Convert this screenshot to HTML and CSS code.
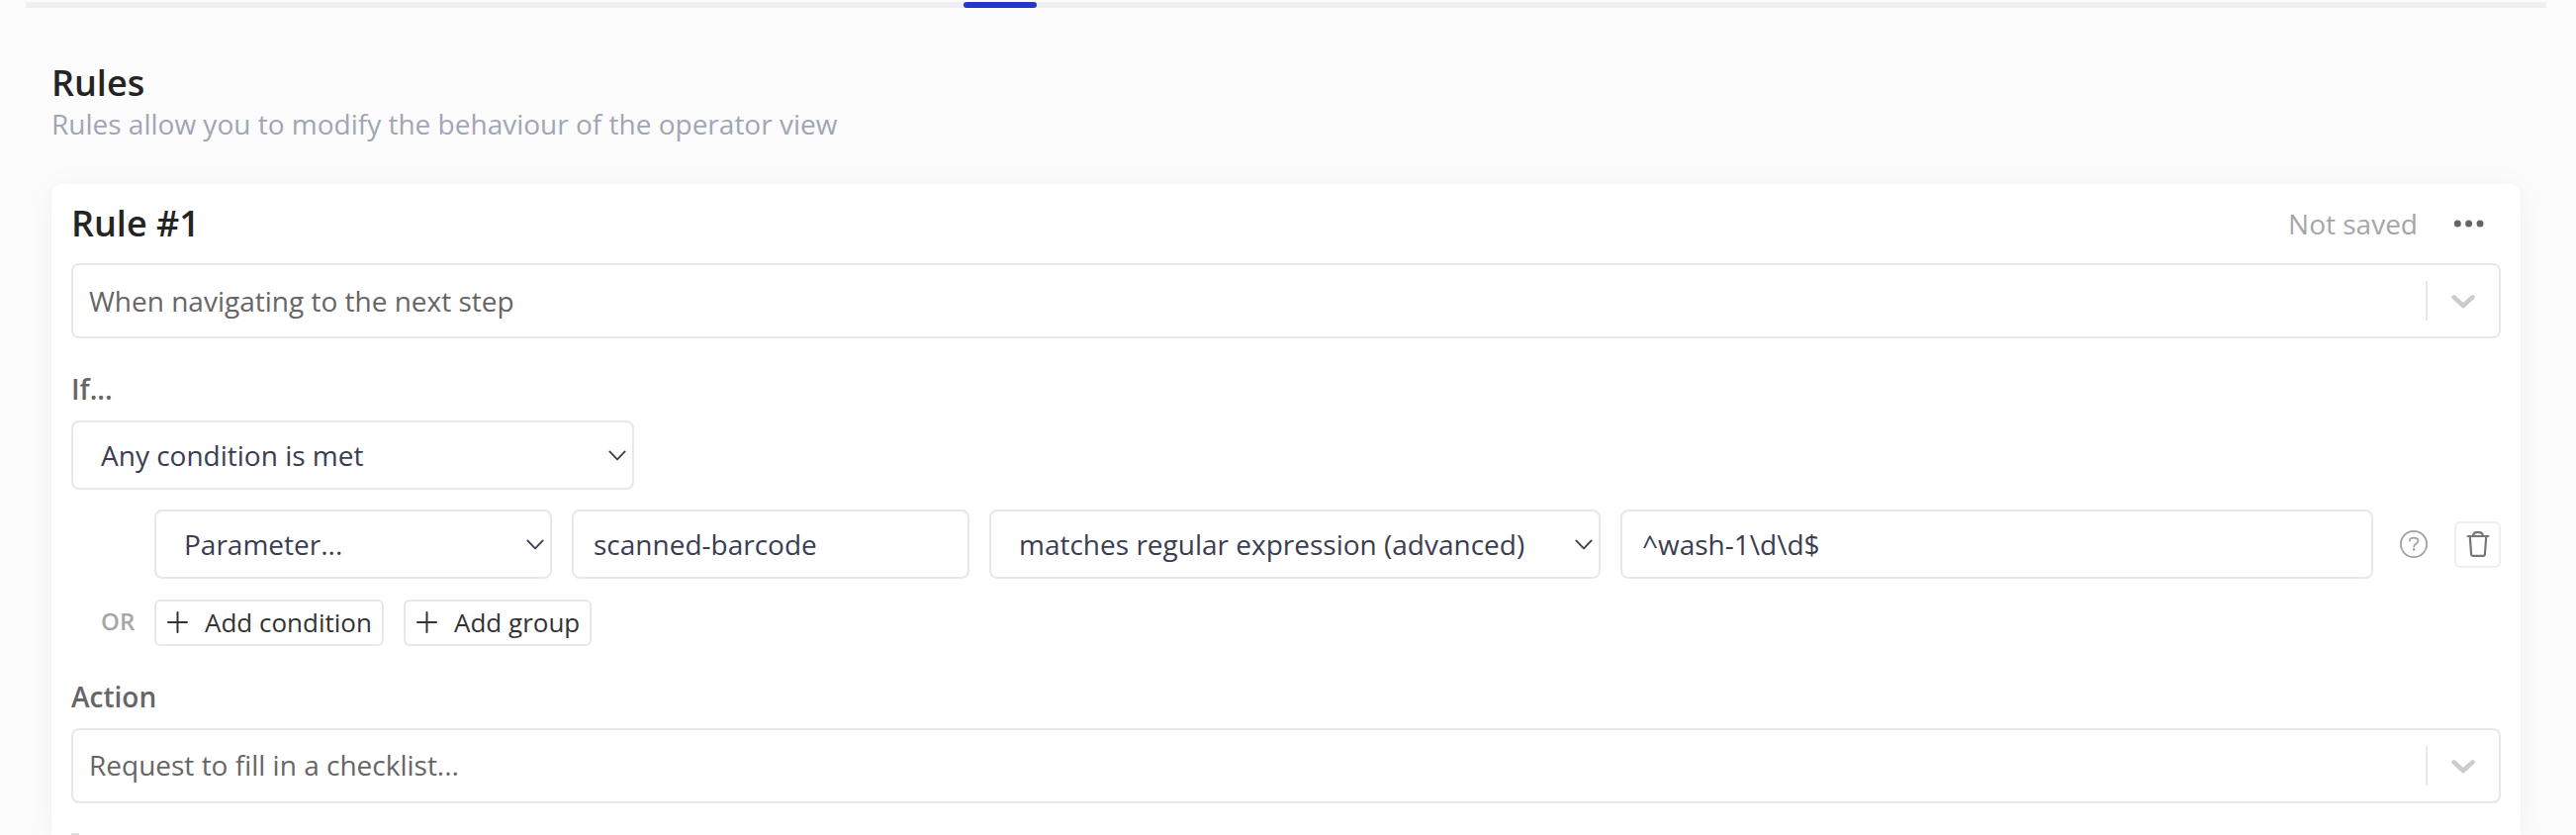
FILE: index.html
```html
<!DOCTYPE html>
<html lang="en">
<head>
<meta charset="utf-8">
<title>Rules</title>
<link rel="stylesheet" href="styles.css">
</head>
<body>
<div class="tab-track"><div class="tab-active"></div></div>
<main class="page">
  <header class="page-header">
    <h1 class="title">Rules</h1>
    <p class="subtitle">Rules allow you to modify the behaviour of the operator view</p>
  </header>
  <section class="card">
    <div class="card-header">
      <h2 class="title card-title">Rule #1</h2>
      <span class="status">Not saved</span>
      <svg class="dots" width="32" height="8" viewBox="0 0 32 8"><circle cx="4.3" cy="4" r="3.5"/><circle cx="15.6" cy="4" r="3.5"/><circle cx="27" cy="4" r="3.5"/></svg>
    </div>
    <div class="combo">
      <span class="combo-value">When navigating to the next step</span>
      <span class="combo-separator"></span>
      <svg class="combo-arrow" width="24" height="16" viewBox="0 0 24 16"><path d="M2.6 4.4 L12 13 L21.4 4.4"/></svg>
    </div>
    <h3 class="label">If...</h3>
    <div class="select select-match">
      <span>Any condition is met</span>
      <svg class="caret" width="18" height="14" viewBox="0 0 18 14"><path d="M1.3 3.4 L9 11.4 L16.7 3.4"/></svg>
    </div>
    <div class="condition">
      <div class="select select-source">
        <span>Parameter...</span>
        <svg class="caret" width="18" height="14" viewBox="0 0 18 14"><path d="M1.3 3.4 L9 11.4 L16.7 3.4"/></svg>
      </div>
      <div class="input input-name">scanned-barcode</div>
      <div class="select select-operator">
        <span>matches regular expression (advanced)</span>
        <svg class="caret" width="18" height="14" viewBox="0 0 18 14"><path d="M1.3 3.4 L9 11.4 L16.7 3.4"/></svg>
      </div>
      <div class="input input-pattern">^wash-1\d\d$</div>
      <svg class="help" width="28" height="28" viewBox="0 0 28 28"><circle cx="14" cy="14" r="13.1"/><path d="M9.9 10.5 C9.9 8.7 11.5 7.7 14 7.7 C16.6 7.7 18.4 9 18.4 11 C18.4 13.4 14.2 13.6 14.2 16.4"/><circle class="help-dot" cx="14.1" cy="19.4" r="1.3"/></svg>
      <div class="icon-button">
        <svg class="trash" width="24" height="28" viewBox="0 0 24 28"><path d="M1.6 6 H22.4"/><path d="M7 5.8 C7.4 3.2 8.6 2.1 10.2 2.1 H13.8 C15.4 2.1 16.6 3.2 17 5.8"/><path d="M3.8 6.3 L5.1 24.4 Q5.2 25.8 6.6 25.8 H17.4 Q18.8 25.8 18.9 24.4 L20.2 6.3"/></svg>
      </div>
    </div>
    <div class="add-row">
      <span class="joiner">OR</span>
      <div class="button button-condition"><svg class="plus" width="21" height="22" viewBox="0 0 21 22"><path d="M10.5 1 V21 M1 11 H20"/></svg><span>Add condition</span></div>
      <div class="button button-group"><svg class="plus" width="21" height="22" viewBox="0 0 21 22"><path d="M10.5 1 V21 M1 11 H20"/></svg><span>Add group</span></div>
    </div>
    <h3 class="label">Action</h3>
    <div class="combo combo-action">
      <span class="combo-value">Request to fill in a checklist...</span>
      <span class="combo-separator"></span>
      <svg class="combo-arrow" width="24" height="16" viewBox="0 0 24 16"><path d="M2.6 4.4 L12 13 L21.4 4.4"/></svg>
    </div>
    <div class="next-block"></div>
  </section>
</main>
</body>
</html>
```
FILE: styles.css
```css
* { box-sizing: border-box; }
body {
  margin: 0;
  height: 844px;
  overflow: hidden;
  padding-top: 2px;
  background: #fcfcfc;
  font: 28px/40px "Open Sans", sans-serif;
  color: #3b3d52;
}
svg { display: block; flex: none; fill: none; stroke-linecap: round; stroke-linejoin: round; }
h1, h2, h3, p { margin: 0; }

.tab-track { height: 6px; margin: 0 30px 0 26px; padding-left: 948px; background: #efeff4; }
.tab-active { width: 74px; height: 6px; border-radius: 3px; background: #2337c9; }

.page { padding: 56px 56px 0 52px; }
.page-header { height: 122px; }
.title { font-size: 36px; font-weight: 600; line-height: 40px; color: #242424; }
.subtitle { margin-top: 1px; color: #a0a6b5; }

.card {
  height: 658px;
  padding: 0 20px;
  border-radius: 10px 10px 0 0;
  background: #fff;
  box-shadow: 0 4px 32px rgba(0, 0, 0, .05), 0 0 4px rgba(0, 0, 0, .02);
}
.card-header { display: flex; align-items: center; height: 80px; padding-right: 16px; }
.card-title { flex: 1; }
.status { margin-right: 36px; color: #a6a6a6; }
.dots circle { fill: #666; }

.combo {
  display: flex;
  align-items: center;
  height: 76px;
  padding: 0 24px 0 16px;
  border: 2px solid #e7e7ee;
  border-radius: 8px;
}
.combo-value { flex: 1; color: #666; }
.combo-action .combo-value { padding-bottom: 2px; }
.combo-separator { width: 2px; height: 40px; margin-right: 24px; background: #e7e7ee; }
.combo-arrow path { stroke: #ccc; stroke-width: 4.6; }

.label { margin: 31px 0 12px; font-size: 28px; font-weight: 600; line-height: 40px; color: #666; }

.select, .input {
  display: flex;
  align-items: center;
  height: 70px;
  border: 2px solid #e7e7ee;
  border-radius: 8px;
  background: #fff;
  white-space: nowrap;
}
.select { justify-content: space-between; padding: 0 6px 0 28px; }
.input { padding: 0 20px; }
.caret path { stroke: #3b3d52; stroke-width: 1.8; }
.select-match { width: 569px; }

.condition { display: flex; align-items: center; margin: 20px 0 0 84px; }
.select-source { width: 402px; margin-right: 20px; }
.input-name { width: 402px; margin-right: 20px; }
.select-operator { width: 618px; margin-right: 20px; }
.input-pattern { width: 761px; margin-right: 27px; }
.help { margin-right: 27px; stroke: #a2a2a2; stroke-width: 1.8; }
.help-dot { fill: #a2a2a2; stroke: none; }
.icon-button {
  display: flex;
  align-items: center;
  justify-content: center;
  width: 47px;
  height: 47px;
  border: 2px solid #efefef;
  border-radius: 6px;
}
.trash { stroke: #777; stroke-width: 2.2; }

.add-row { display: flex; align-items: center; margin-top: 21px; }
.joiner { width: 84px; padding: 0 0 4px 30px; font-size: 24px; font-weight: 600; color: #a6a6a6; }
.button {
  display: flex;
  align-items: center;
  gap: 17px;
  height: 47px;
  padding: 0 0 1px 11px;
  border: 2px solid #e8e8e8;
  border-radius: 6px;
  font-size: 26px;
  color: #333;
  white-space: nowrap;
}
.button-condition { width: 232px; margin-right: 20px; }
.button-group { width: 190px; }
.plus { stroke: #333; stroke-width: 2; }

.next-block { width: 8px; height: 2px; margin-top: 30px; background: #dcdce2; }
```
